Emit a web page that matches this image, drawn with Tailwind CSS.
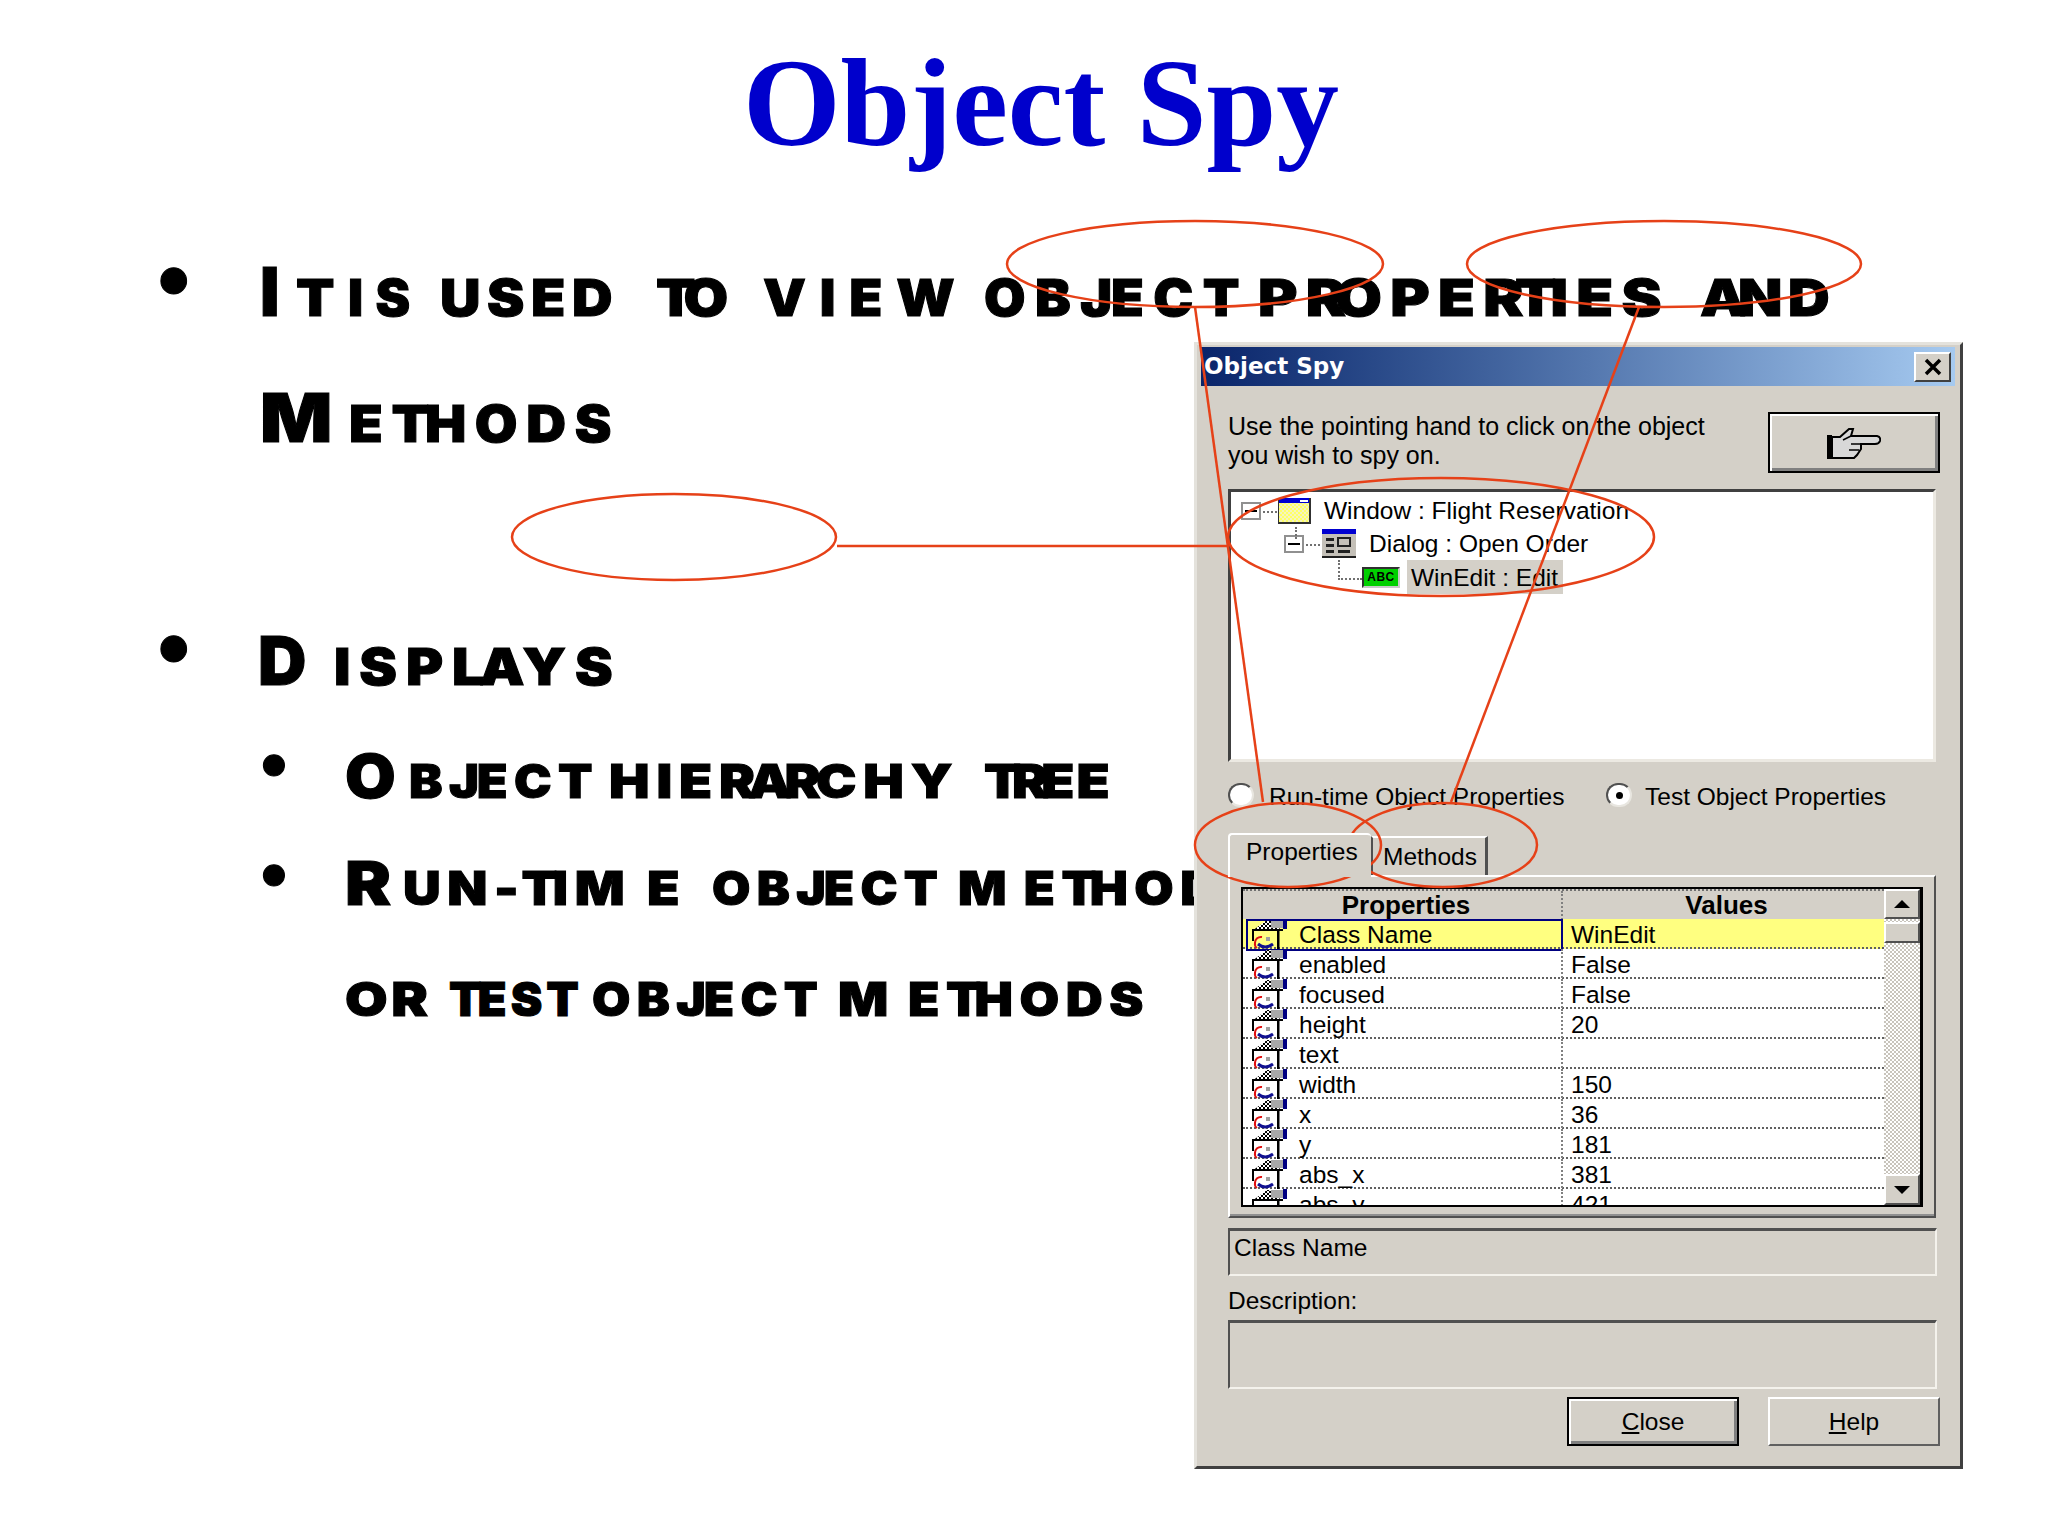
<!DOCTYPE html>
<html lang="en">
  <head>
    <meta charset="UTF-8" />
    <title>Object Spy</title>
    <script src="https://cdn.jsdelivr.net/npm/@tailwindcss/browser@4"></script>
  </head>
  <body class="bg-white">
    <div class="relative w-[2048px] h-[1536px] overflow-hidden bg-white">
      <!-- Slide title -->
      <h1 class="pt-[33px] pl-[34px] text-center font-['Liberation_Serif',serif] font-bold text-[125.5px] leading-[140px] text-[#0000cc]">
        Object Spy
      </h1>

      <!-- Slide bullets -->
      <div class="pl-[158px] mt-[62px] font-['Inter',sans-serif] font-black text-black text-[51px] leading-none whitespace-nowrap [-webkit-text-stroke:1px_#000]">
        <div class="flex items-baseline">
          <span class="w-[102px] shrink-0 -translate-y-[5px] font-['Liberation_Sans',sans-serif] text-[90px] leading-[100px]">•</span>
          <span class="w-[36px] shrink-0 text-[67px] leading-none">I</span>
          <span class="w-[52px] shrink-0 origin-left scale-x-[1.1]">T</span>
          <span class="w-[92px] shrink-0 tracking-[12px] origin-left scale-x-[1.02]">IS</span>
          <span class="w-[216px] shrink-0 tracking-[6px] origin-left scale-x-[1.1]">USED</span>
          <span class="w-[107px] shrink-0 tracking-[-9px] origin-left scale-x-[1.13]">TO</span>
          <span class="w-[221px] shrink-0 tracking-[13px] origin-left scale-x-[1.06]">VIEW</span>
          <span class="w-[274px] shrink-0 tracking-[9px] origin-left scale-x-[1.05]">OBJ<span class="-ml-[10px]">ECT</span></span>
          <span class="w-[442px] shrink-0 tracking-[7px] origin-left scale-x-[1.18]">PR<span class="-ml-[16px]">OPER</span><span class="-ml-[14px]">T</span><span class="-ml-[12px]">IES</span></span>
          <span class="shrink-0 tracking-[5px] origin-left scale-x-[1.13]">A<span class="-ml-[12px]">ND</span></span>
        </div>

        <div class="flex items-baseline pl-[102px] mt-[49px]">
          <span class="w-[89px] shrink-0 text-[67px] leading-none origin-left scale-x-[1.13]">M</span>
          <span class="shrink-0 tracking-[8px] origin-left scale-x-[1.08]">ET<span class="-ml-[12px]">H</span>ODS</span>
        </div>

        <div class="flex items-baseline mt-[153px]">
          <span class="w-[100px] shrink-0 -translate-y-[6px] font-['Liberation_Sans',sans-serif] text-[90px] leading-[100px]">•</span>
          <span class="w-[76px] shrink-0 text-[67px] leading-none">D</span>
          <span class="shrink-0 tracking-[8px] origin-left scale-x-[1.11]">ISPL<span class="-ml-[12px]">A</span><span class="-ml-[10px]">Y</span>S</span>
        </div>

        <div class="flex items-baseline pl-[103px] mt-[29px] text-[47px]">
          <span class="w-[84px] shrink-0 -translate-y-[8px] font-['Liberation_Sans',sans-serif] text-[74px] leading-[80px]">•</span>
          <span class="w-[64px] shrink-0 text-[60px] leading-none origin-left scale-x-[1.09]">O</span>
          <span class="w-[200px] shrink-0 tracking-[6px] origin-left scale-x-[1.07]">BJ<span class="-ml-[8px]">ECT</span></span>
          <span class="w-[375px] shrink-0 tracking-[6px] origin-left scale-x-[1.15]">HIER<span class="-ml-[12px]">A</span><span class="-ml-[12px]">R</span><span class="-ml-[10px]">C</span>HY</span>
          <span class="shrink-0 tracking-[2px] origin-left scale-x-[1.15]">T<span class="-ml-[10px]">R</span><span class="-ml-[8px]">E</span>E</span>
        </div>

        <div class="flex items-baseline pl-[103px] mt-[27px] text-[47px]">
          <span class="w-[84px] shrink-0 -translate-y-[5px] font-['Liberation_Sans',sans-serif] text-[74px] leading-[80px]">•</span>
          <span class="w-[58px] shrink-0 text-[60px] leading-none origin-left scale-x-[1.15]">R</span>
          <span class="w-[244px] shrink-0 tracking-[6px] origin-left scale-x-[1.11]">UN-T<span class="-ml-[10px]">I</span>M</span>
          <span class="w-[65px] shrink-0 origin-left scale-x-[1.13]">E</span>
          <span class="w-[246px] shrink-0 tracking-[6px] origin-left scale-x-[1.055]">OBJ<span class="-ml-[8px]">ECT</span></span>
          <span class="shrink-0 tracking-[6px] origin-left scale-x-[1.08]">M<span class="ml-[10px]">ET</span><span class="-ml-[12px]">H</span>ODS</span>
        </div>

        <div class="flex items-baseline pl-[187px] mt-[55px] text-[47px]">
          <span class="w-[104px] shrink-0 tracking-[3px] origin-left scale-x-[1.17]">OR</span>
          <span class="w-[143px] shrink-0 tracking-[4px] origin-left scale-x-[1.01]">T<span class="-ml-[8px]">EST</span></span>
          <span class="w-[246px] shrink-0 tracking-[6px] origin-left scale-x-[1.055]">OBJ<span class="-ml-[8px]">ECT</span></span>
          <span class="w-[70px] shrink-0 origin-left scale-x-[1.12]">M</span>
          <span class="shrink-0 tracking-[6px] origin-left scale-x-[1.09]">ET<span class="-ml-[12px]">H</span>ODS</span>
        </div>
      </div>

      <!-- Shared icons -->
      <svg class="absolute w-0 h-0">
        <defs>
          <pattern id="checker" width="4" height="4" patternUnits="userSpaceOnUse">
            <rect width="4" height="4" fill="#ffffff" />
            <rect width="2" height="2" fill="#000000" />
            <rect x="2" y="2" width="2" height="2" fill="#000000" />
          </pattern>
          <pattern id="yellowdots" width="4" height="4" patternUnits="userSpaceOnUse">
            <rect width="4" height="4" fill="#ffff66" />
            <rect width="2" height="2" fill="#f4f4c0" />
            <rect x="2" y="2" width="2" height="2" fill="#f4f4c0" />
          </pattern>
          <symbol id="prop" viewBox="0 0 36 30">
            <path d="M16 1 L1 12 L30 12 L24 1 Z" fill="url(#checker)" />
            <rect x="20" y="1" width="13" height="8" fill="#a8a8a8" />
            <rect x="32" y="0" width="4" height="10" fill="#000080" />
            <rect x="1" y="10" width="31" height="2" fill="#000000" />
            <rect x="1" y="11" width="2" height="11" fill="#000000" />
            <rect x="26" y="10" width="2.5" height="20" fill="#000000" />
            <path d="M11 18 A6 6 0 0 0 4 24 A5 5 0 0 0 6 29" fill="none" stroke="#e01010" stroke-width="2" />
            <path d="M7 25 Q14 31 22 25" fill="none" stroke="#101090" stroke-width="3" />
            <rect x="15" y="18" width="4" height="4" fill="#a0a0a0" />
          </symbol>
        </defs>
      </svg>

      <!-- Object Spy dialog -->
      <div class="absolute left-[1194px] top-[342px] w-[769px] h-[1127px] bg-[#d4d0c8] border-[3px] border-t-[#e4e2dc] border-l-[#e4e2dc] border-r-[#404040] border-b-[#404040] font-['Liberation_Sans',sans-serif] text-[24.5px] leading-[29px] text-black whitespace-nowrap">
        <!-- Title bar -->
        <div class="flex items-center justify-between h-[39px] mt-[2px] ml-[4px] mr-[5px] pl-[3px] pr-[4px] bg-gradient-to-r from-[#0a246a] to-[#a6caf0]">
          <span class="font-['DejaVu_Sans',sans-serif] font-bold text-[23px] text-white">Object Spy</span>
          <button class="flex items-center justify-center w-[37px] h-[30px] bg-[#d4d0c8] border-2 border-t-white border-l-white border-r-[#404040] border-b-[#404040]">
            <svg width="20" height="18" viewBox="0 0 20 18"><path d="M3 2 L17 16 M17 2 L3 16" stroke="#000000" stroke-width="3.5" /></svg>
          </button>
        </div>

        <div class="pl-[31px] w-[743px]">
          <!-- Instructions and finder -->
          <div class="flex justify-between mt-[26px]">
            <p class="text-[25px]">Use the pointing hand to click on the object<br />you wish to spy on.</p>
            <button class="flex items-center justify-center w-[172px] h-[61px] bg-[#d4d0c8] border-2 border-black shadow-[inset_2px_2px_0_#ffffff,inset_-3px_-3px_0_#808080]">
              <svg width="54" height="32" viewBox="0 0 54 32">
                <rect x="0" y="8" width="5" height="24" fill="#000000" />
                <path d="M5 10 L13 10 L22 2 L26 2 L24 9 L50 9 Q54 10 53 14 Q52 17 48 17 L34 17 L34 22 L32 25 L30 28 L27 31 L5 31 Z" fill="#d8d8d8" stroke="#000000" stroke-width="2" />
                <path d="M24 17 L34 17 M22 23 L32 23 M16 13 L24 9" fill="none" stroke="#000000" stroke-width="1.5" />
              </svg>
            </button>
          </div>

          <!-- Object hierarchy tree -->
          <div class="relative w-[708px] h-[273px] mt-[16px] bg-white border-[3px] border-t-[#404040] border-l-[#404040] border-r-[#ece9e2] border-b-[#ece9e2]">
            <div class="absolute left-[32px] top-[19px] w-[14px] border-t-2 border-dotted border-[#707070]"></div>
            <div class="absolute left-[64px] top-[35px] h-[12px] border-l-2 border-dotted border-[#707070]"></div>
            <div class="absolute left-[75px] top-[52px] w-[14px] border-t-2 border-dotted border-[#707070]"></div>
            <div class="absolute left-[107px] top-[68px] h-[20px] w-[24px] border-l-2 border-b-2 border-dotted border-[#707070]"></div>

            <div class="flex items-center h-[31px] pl-[10px] mt-[3px]">
              <span class="flex items-center justify-center w-[20px] h-[18px] border-2 border-[#909090] bg-white"><span class="w-[12px] h-[2px] bg-black"></span></span>
              <svg class="ml-[17px]" width="33" height="26" viewBox="0 0 33 26">
                <rect width="33" height="26" fill="#303030" />
                <rect x="1" width="30" height="5" fill="#0000d0" />
                <rect x="22" y="2" width="8" height="2" fill="#ffffff" />
                <rect x="1" y="5" width="30" height="19" fill="url(#yellowdots)" />
              </svg>
              <span class="ml-[13px]">Window : Flight Reservation</span>
            </div>
            <div class="flex items-center h-[33px] pl-[53px] mt-[1px]">
              <span class="flex items-center justify-center w-[20px] h-[18px] border-2 border-[#909090] bg-white"><span class="w-[12px] h-[2px] bg-black"></span></span>
              <svg class="ml-[18px]" width="34" height="29" viewBox="0 0 34 29">
                <rect width="34" height="29" fill="#c4c0b8" />
                <rect width="34" height="5" fill="#0000d0" />
                <rect x="4" y="9" width="8" height="3" fill="#202020" />
                <rect x="4" y="15" width="8" height="3" fill="#202020" />
                <rect x="4" y="21" width="8" height="3" fill="#202020" />
                <rect x="16" y="9" width="12" height="8" fill="none" stroke="#202020" stroke-width="2" />
                <rect x="16" y="21" width="12" height="3" fill="#202020" />
                <rect y="27" width="34" height="2" fill="#202020" />
              </svg>
              <span class="ml-[13px]">Dialog : Open Order</span>
            </div>
            <div class="flex items-center h-[34px] pl-[131px]">
              <span class="flex items-center justify-center w-[38px] h-[21px] bg-[#00d000] border-2 border-t-[#303030] border-l-[#303030] border-r-[#c8c8c8] border-b-[#c8c8c8] font-bold text-[12px] leading-none tracking-[0.5px]">ABC</span>
              <span class="ml-[7px] h-[34px] w-[156px] pl-[4px] bg-[#d4d0c8] leading-[36px]">WinEdit : Edit</span>
            </div>
          </div>

          <!-- Property source -->
          <div class="flex items-center mt-[21px] h-[24px]">
            <span class="shrink-0 w-[26px] h-[24px] rounded-full bg-white border-2 border-t-[#505050] border-l-[#505050] border-r-[#e8e6e0] border-b-[#e8e6e0]"></span>
            <span class="w-[337px] shrink-0 ml-[15px] mt-[3px]">Run-time Object Properties</span>
            <span class="flex items-center justify-center shrink-0 w-[26px] h-[24px] rounded-full bg-white border-2 border-t-[#505050] border-l-[#505050] border-r-[#e8e6e0] border-b-[#e8e6e0]"><span class="w-[7px] h-[7px] rounded-full bg-black"></span></span>
            <span class="ml-[13px] mt-[3px]">Test Object Properties</span>
          </div>

          <!-- Tabs -->
          <div class="flex items-end h-[42px] mt-[26px]">
            <div class="relative z-10 w-[143px] h-[44px] -mb-[2px] pl-[16px] pt-[2px] bg-[#d4d0c8] border-t-2 border-l-2 border-white rounded-t-[4px]">Properties</div>
            <div class="w-[117px] h-[39px] pl-[10px] pt-[4px] border-t-2 border-white border-l-2 border-r-[3px] border-r-[#505050] border-l-[#505050]">Methods</div>
          </div>

          <!-- Properties panel -->
          <div class="w-[708px] h-[343px] pl-[11px] pr-[11px] pt-[10px] border-2 border-t-white border-l-white border-r-[#505050] border-b-[#505050] shadow-[inset_0_-2px_0_#909090]">
            <div class="flex w-[682px] h-[320px] overflow-hidden bg-white border-[2px] border-black border-r-[3px]">
              <div class="w-[641px] shrink-0">
                <div class="grid grid-cols-[320px_1fr] h-[30px] bg-[#d4d0c8] border-t-2 border-dotted border-[#707070] font-bold text-[26px] leading-[29px] text-center">
                  <div class="pl-[8px] border-r-2 border-dotted border-[#808080]">Properties</div>
                  <div class="pl-[6px]">Values</div>
                </div>

                <div class="grid grid-cols-[320px_1fr] h-[30px] bg-[#ffff80] border-b-2 border-dotted border-[#606060] leading-[32px]">
                  <div class="flex border-2 border-[#000080] ml-[3px] overflow-hidden">
                    <svg class="ml-[3px] -mt-[2px] shrink-0" width="36" height="30"><use href="#prop" /></svg>
                    <span class="ml-[12px] -mt-[2px]">Class Name</span>
                  </div>
                  <div class="pl-[8px]">WinEdit</div>
                </div>

                <div class="grid grid-cols-[320px_1fr] h-[30px] border-b-2 border-dotted border-[#606060] leading-[32px]">
                  <div class="flex pl-[8px] border-r-2 border-dotted border-[#808080]"><svg class="shrink-0" width="36" height="30"><use href="#prop" /></svg><span class="ml-[12px]">enabled</span></div>
                  <div class="pl-[8px]">False</div>
                </div>
                <div class="grid grid-cols-[320px_1fr] h-[30px] border-b-2 border-dotted border-[#606060] leading-[32px]">
                  <div class="flex pl-[8px] border-r-2 border-dotted border-[#808080]"><svg class="shrink-0" width="36" height="30"><use href="#prop" /></svg><span class="ml-[12px]">focused</span></div>
                  <div class="pl-[8px]">False</div>
                </div>
                <div class="grid grid-cols-[320px_1fr] h-[30px] border-b-2 border-dotted border-[#606060] leading-[32px]">
                  <div class="flex pl-[8px] border-r-2 border-dotted border-[#808080]"><svg class="shrink-0" width="36" height="30"><use href="#prop" /></svg><span class="ml-[12px]">height</span></div>
                  <div class="pl-[8px]">20</div>
                </div>
                <div class="grid grid-cols-[320px_1fr] h-[30px] border-b-2 border-dotted border-[#606060] leading-[32px]">
                  <div class="flex pl-[8px] border-r-2 border-dotted border-[#808080]"><svg class="shrink-0" width="36" height="30"><use href="#prop" /></svg><span class="ml-[12px]">text</span></div>
                  <div class="pl-[8px]"></div>
                </div>
                <div class="grid grid-cols-[320px_1fr] h-[30px] border-b-2 border-dotted border-[#606060] leading-[32px]">
                  <div class="flex pl-[8px] border-r-2 border-dotted border-[#808080]"><svg class="shrink-0" width="36" height="30"><use href="#prop" /></svg><span class="ml-[12px]">width</span></div>
                  <div class="pl-[8px]">150</div>
                </div>
                <div class="grid grid-cols-[320px_1fr] h-[30px] border-b-2 border-dotted border-[#606060] leading-[32px]">
                  <div class="flex pl-[8px] border-r-2 border-dotted border-[#808080]"><svg class="shrink-0" width="36" height="30"><use href="#prop" /></svg><span class="ml-[12px]">x</span></div>
                  <div class="pl-[8px]">36</div>
                </div>
                <div class="grid grid-cols-[320px_1fr] h-[30px] border-b-2 border-dotted border-[#606060] leading-[32px]">
                  <div class="flex pl-[8px] border-r-2 border-dotted border-[#808080]"><svg class="shrink-0" width="36" height="30"><use href="#prop" /></svg><span class="ml-[12px]">y</span></div>
                  <div class="pl-[8px]">181</div>
                </div>
                <div class="grid grid-cols-[320px_1fr] h-[30px] border-b-2 border-dotted border-[#606060] leading-[32px]">
                  <div class="flex pl-[8px] border-r-2 border-dotted border-[#808080]"><svg class="shrink-0" width="36" height="30"><use href="#prop" /></svg><span class="ml-[12px]">abs_x</span></div>
                  <div class="pl-[8px]">381</div>
                </div>
                <div class="grid grid-cols-[320px_1fr] h-[30px] leading-[32px]">
                  <div class="flex pl-[8px] border-r-2 border-dotted border-[#808080]"><svg class="shrink-0" width="36" height="30"><use href="#prop" /></svg><span class="ml-[12px]">abs_y</span></div>
                  <div class="pl-[8px]">421</div>
                </div>
              </div>

              <!-- Scrollbar -->
              <div class="flex flex-col w-[36px] shrink-0 bg-[repeating-conic-gradient(#ffffff_0_25%,#c8c4bc_0_50%)] bg-size-[4px_4px]">
                <div class="flex items-center justify-center h-[30px] bg-[#d4d0c8] border-2 border-t-white border-l-white border-r-[#505050] border-b-[#505050]">
                  <span class="w-0 h-0 border-x-[8px] border-x-transparent border-b-[8px] border-b-black"></span>
                </div>
                <div class="h-[21px] mt-[3px] bg-[#d4d0c8] border-2 border-t-white border-l-white border-r-[#505050] border-b-[#505050]"></div>
                <div class="flex items-center justify-center h-[31px] mt-auto bg-[#d4d0c8] border-2 border-t-white border-l-white border-r-[#505050] border-b-[#505050]">
                  <span class="w-0 h-0 border-x-[8px] border-x-transparent border-t-[8px] border-t-black"></span>
                </div>
              </div>
            </div>
          </div>

          <!-- Description -->
          <div class="w-[709px] h-[48px] mt-[10px] pl-[4px] pt-[2px] border-2 border-t-[3px] border-t-[#505050] border-l-[#505050] border-r-[#f4f2ec] border-b-[#f4f2ec]">Class Name</div>
          <p class="mt-[10px]">Description:</p>
          <div class="w-[709px] h-[69px] mt-[5px] border-2 border-t-[3px] border-t-[#505050] border-l-[#505050] border-r-[#f4f2ec] border-b-[#f4f2ec]"></div>

          <!-- Buttons -->
          <div class="flex justify-end gap-[29px] mt-[8px]">
            <button class="w-[172px] h-[49px] border-2 border-black shadow-[inset_2px_2px_0_#ffffff,inset_-3px_-3px_0_#808080]"><span class="underline">C</span>lose</button>
            <button class="w-[172px] h-[49px] border-2 border-t-white border-l-white border-r-[#606060] border-b-[#606060]"><span class="underline">H</span>elp</button>
          </div>
        </div>
      </div>

      <!-- Red annotations drawn over the slide -->
      <svg class="absolute inset-0 pointer-events-none" width="2048" height="1536" viewBox="0 0 2048 1536" fill="none" stroke="#e64118" stroke-width="2.5">
        <ellipse cx="1195" cy="264" rx="188" ry="43" />
        <ellipse cx="1664" cy="264" rx="197" ry="43" />
        <ellipse cx="674" cy="537" rx="162" ry="43" />
        <ellipse cx="1441" cy="537" rx="213" ry="59" />
        <ellipse cx="1288" cy="845" rx="93" ry="42" />
        <ellipse cx="1443" cy="845" rx="94" ry="42" />
        <path d="M837 546 L1228 546" />
        <path d="M1195 307 L1263 802" />
        <path d="M1639 307 L1451 802" />
      </svg>
    </div>
  </body>
</html>
